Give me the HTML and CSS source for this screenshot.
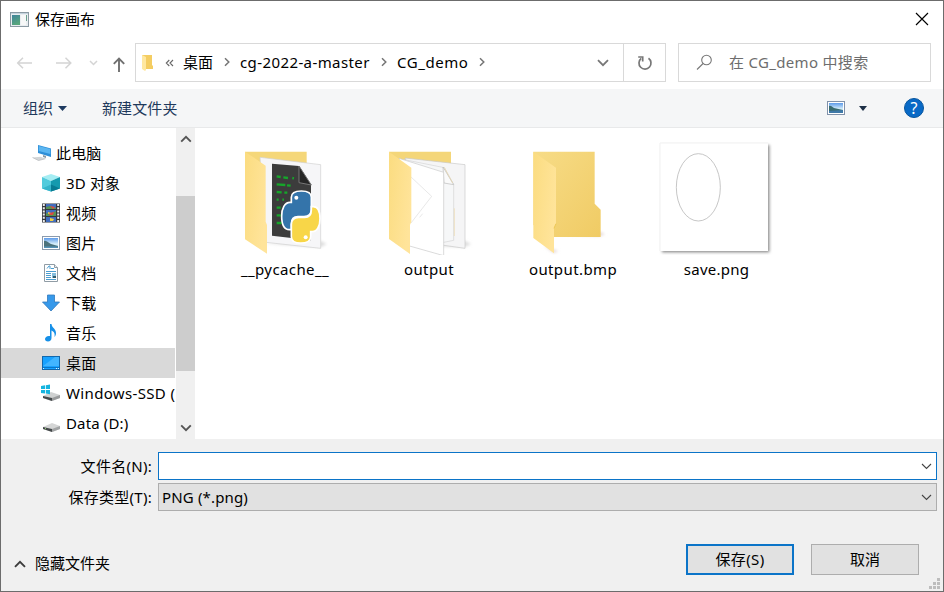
FILE: index.html
```html
<!DOCTYPE html>
<html lang="zh-CN">
<head>
<meta charset="utf-8">
<title>保存画布</title>
<link rel="stylesheet" href="styles.css">
</head>
<body>
<div class="dialog">
  <header class="titlebar">
    <svg class="app-icon" width="19" height="15" viewBox="0 0 19 15"><defs><linearGradient id="app" x2="0.4" y2="1"><stop stop-color="#3f839b"/><stop offset="1" stop-color="#58a67c"/></linearGradient></defs><rect x=".5" y=".5" width="18" height="14" fill="#e9edf0" stroke="#8b9aa3"/><path d="M1 1.5h17" stroke="#c4d3dd"/><rect x="2" y="3" width="8" height="10" fill="url(#app)"/><rect x="11" y="3" width="5" height="10" fill="#f7f8f8"/><path d="M16.5 3v6" stroke="#6ba18d"/></svg>
    <h1 class="title">保存画布</h1>
    <svg class="close" width="14" height="14" viewBox="0 0 14 14"><path d="M1 1l12 12M13 1L1 13" stroke="#000" stroke-width="1.15"/></svg>
  </header>

  <div class="navbar">
    <div class="history">
      <svg width="118" height="24" viewBox="0 0 118 24" fill="none"><g stroke="#d4d4d4" stroke-width="1.5"><path d="M16 12H2M7 6.7L1.7 12 7 17.3M40 12H54.500M49.500 6.700l5.300 5.300-5.300 5.300"/><path d="M74 10l3.500 3.500L81 10"/></g><path d="M103 21V7.500M97.800 12.800L103 7.500l5.200 5.300" stroke="#707070" stroke-width="1.9"/></svg>
    </div>
    <div class="address">
      <svg class="folder" width="13" height="17" viewBox="0 0 13 17"><path d="M1 1h10v10l1 1v3H3z" fill="#f4cd62"/><path d="M1 1l4 2v13l-1 1-3-2z" fill="#ffe8a0"/></svg>
      <svg class="more" width="9" height="8" viewBox="0 0 9 8"><path d="M4.300 1L1.300 4l3 3M8 1L5 4l3 3" fill="none" stroke="#666" stroke-width="1.100"/></svg>
      <span class="crumb desk">桌面</span>
      <svg class="sep" width="6" height="10" viewBox="0 0 6 10"><path d="M1 1.200L4.800 5 1 8.800" fill="none" stroke="#757575" stroke-width="1.500"/></svg>
      <span class="crumb master">cg-2022-a-master</span>
      <svg class="sep" width="6" height="10" viewBox="0 0 6 10"><path d="M1 1.200L4.800 5 1 8.800" fill="none" stroke="#757575" stroke-width="1.500"/></svg>
      <span class="crumb demo">CG_demo</span>
      <svg class="sep" width="6" height="10" viewBox="0 0 6 10"><path d="M1 1.200L4.800 5 1 8.800" fill="none" stroke="#757575" stroke-width="1.500"/></svg>
      <svg class="drop" width="12" height="8" viewBox="0 0 12 8"><path d="M1 1.200l5 5 5-5" fill="none" stroke="#777" stroke-width="1.800"/></svg>
      <div class="refresh"><svg width="16" height="16" viewBox="0 0 16 16" fill="none" stroke="#777" stroke-width="1.700"><path d="M11.500 3.200A6 6 0 1 1 4.200 3.400"/><path d="M1.200 2h4.500v4.500"/></svg></div>
    </div>
    <div class="search">
      <svg width="17" height="17" viewBox="0 0 17 17" fill="none" stroke="#777" stroke-width="1.100"><circle cx="10.500" cy="6" r="4.800"/><path d="M7.100 9.500L1 15.500"/></svg>
      <span>在 CG_demo 中搜索</span>
    </div>
  </div>

  <div class="toolbar">
    <span class="organize">组织</span>
    <svg class="caret" width="9" height="5" viewBox="0 0 9 5"><path d="M0 0h9L4.500 5z" fill="#1e3a60"/></svg>
    <span class="new-folder">新建文件夹</span>
    <svg class="view" width="18" height="14" viewBox="0 0 18 14"><defs><linearGradient id="sky" x2="0" y2="1"><stop stop-color="#5d9bea"/><stop offset=".6" stop-color="#d8effa"/><stop offset="1" stop-color="#b9dced"/></linearGradient></defs><rect x=".5" y=".5" width="17" height="13" fill="#fff" stroke="#8192aa"/><rect x="2" y="2" width="14" height="10" fill="url(#sky)"/><path d="M2 5c2-1 3 1 5 2l9 2v3H2z" fill="#396c70"/><path d="M2 10l14-1v3H2z" fill="#3f79a8"/></svg>
    <svg class="caret view-caret" width="8" height="5" viewBox="0 0 8 5"><path d="M0 0h8L4 5z" fill="#1e3047"/></svg>
    <div class="help">?</div>
  </div>

  <main class="body">
    <nav class="tree">
      <div class="row root"><svg width="20" height="18" viewBox="0 0 20 18"><path d="M6 1l13 3.500v8.500L6 9z" fill="#2e8fd8"/><path d="M6.800 2l11.500 3v5L6.800 7z" fill="#5bb6f1"/><path d="M11 11l3 1v2l-3-1z" fill="#8b9aa5"/><path d="M.5 13.500l8-.8 5 2-7 1.800z" fill="#d2d5d7"/><path d="M.5 13.500l6 3 7-1.800" fill="none" stroke="#b5b8ba" stroke-width=".7"/></svg><span>此电脑</span></div>
      <div class="row"><svg width="20" height="20" viewBox="0 0 20 20"><path d="M1 4l9-3 9 3-9 4z" fill="#a5edf3"/><path d="M1 4l9 4v10.500l-9-3z" fill="#52cbdc"/><path d="M10 8l9-4v11.500l-9 3z" fill="#159aae"/><path d="M1 15.500l9-4v7z" fill="#36b5cb"/><path d="M10 11.500l9 4-9 3z" fill="#087b92"/></svg><span>3D 对象</span></div>
      <div class="row"><svg width="20" height="20" viewBox="0 0 20 20"><path d="M1 .5h18v19H1z" fill="#33373d"/><path d="M2.800 1v18M17.200 1v18" stroke="#eee" stroke-width="2" stroke-dasharray="2 1.200"/><path d="M5 1h10v5H5zM5 7h10v6H5zM5 14h10v5H5z" fill="#426dbd"/><path d="M5 4l4-1 6 2v1H5zM5 10l4 1 6-3v5H5z" fill="#589252"/><path d="M9 3l5 1-2 2zM8 10l5-1-1 3H8z" fill="#dd4b3e"/><path d="M9 15l4 1-1 2H9zM7 9l3 1-3 1z" fill="#f0ce44"/></svg><span>视频</span></div>
      <div class="row"><svg width="20" height="16" viewBox="0 0 20 16"><rect x="1.500" y="1.500" width="17" height="13" fill="#fff" stroke="#8b9bad"/><rect x="3" y="3" width="14" height="10" fill="url(#sky)"/><path d="M3 6c3-1 4 2 7 3l7 2v2H3z" fill="#4b727b"/><path d="M3 11.500h14V13H3z" fill="#5491b6"/></svg><span>图片</span></div>
      <div class="row"><svg width="20" height="20" viewBox="0 0 20 20"><path d="M3.500 1.500h10l3 3v14h-13z" fill="#fff" stroke="#909ca5"/><path d="M13.500 1.500v3h3" fill="#e5ebef" stroke="#909ca5"/><path d="M6 5.500L8 3h1v3M10 5.500h3M5 8.500h10M5 10.500h5M5 12.500h5M5 14.500h5M5 16.500h10" stroke="#4a9dd0" fill="none"/><path d="M11 10h4v5h-4z" fill="#84bddd"/><path d="M12 13h3v2h-3z" fill="#335c6b"/></svg><span>文档</span></div>
      <div class="row"><svg width="20" height="20" viewBox="0 0 20 20"><path d="M6.500 2h7v7h5L10 18 1.500 9h5z" fill="#3799ea" stroke="#3178bc" stroke-width=".8"/></svg><span>下载</span></div>
      <div class="row"><svg width="20" height="20" viewBox="0 0 20 20"><path d="M9 1h1.500c.3 4 4.500 4.500 4.500 9 0 1.800-.6 3-1.500 4 .7-4-.7-5.500-3-6.500V15c0 2.200-1.500 3.500-3.500 3.500S4 17.500 4 16c0-2 2-3.500 5-3z" fill="#1690e8"/></svg><span>音乐</span></div>
      <div class="row selected"><svg width="20" height="16" viewBox="0 0 20 16"><rect x="1.500" y="1.500" width="17" height="13" fill="#18a2ff" stroke="#1268ad"/><path d="M2 11L14 2h4v9z" fill="#42b5ff"/><path d="M2 12.500h16" stroke="#0876c9"/><path d="M2 13.500h1m12 0h1m1 0h1" stroke="#d8f2ff"/></svg><span>桌面</span></div>
      <div class="row"><svg width="20" height="18" viewBox="0 0 20 18"><path d="M2 12l8-4 9 3v3l-9 3-8-3z" fill="#cfd1d1"/><path d="M2 12l9 2v3l-9-3z" fill="#454a4c"/><path d="M11 14l8-3v3l-8 3z" fill="#999b9c"/><path d="M0 2l4-.7V5H0zM4.800 1.200L9 .5V5H4.800zM0 6h4v3.500L0 9zM4.800 6H9v4.200l-4.200-.6z" fill="#15b4df"/></svg><span class="drive">Windows-SSD (</span></div>
      <div class="row"><svg class="disk" width="20" height="16" viewBox="0 0 20 16"><path d="M2 10l9-4 8 3v3l-8 3-9-3z" fill="#d5d6d6"/><path d="M2 10l9 2v3l-9-3z" fill="#44484a"/><path d="M11 12l8-3v3l-8 3z" fill="#a2a4a5"/><path d="M4 11.500l1 .3" stroke="#9be17c"/></svg><span class="data">Data (D:)</span></div>
    </nav>
    <div class="scrollbar">
      <svg class="arrow up" width="12" height="8" viewBox="0 0 12 8"><path d="M1.200 6.700L6 1.900l4.800 4.800" fill="none" stroke="#555" stroke-width="1.900"/></svg>
      <div class="thumb"></div>
      <svg class="arrow down" width="12" height="8" viewBox="0 0 12 8"><path d="M1.200 1.300L6 6.100l4.800-4.800" fill="none" stroke="#555" stroke-width="1.900"/></svg>
    </div>
    <section class="files">
      <figure class="file">
        <svg width="120" height="120" viewBox="-15 0 360 360">
          <defs><linearGradient id="back" x2="1" y2="1"><stop stop-color="#f7dc87"/><stop offset="1" stop-color="#f0cb64"/></linearGradient><linearGradient id="front" x2="1" y2="0.500"><stop stop-color="#fbdc80"/><stop offset="1" stop-color="#ffe49a"/></linearGradient><filter id="soft" x="-20%" y="-50%" width="140%" height="200%"><feGaussianBlur stdDeviation="4"/></filter></defs>
          <path d="M100 325l170-8 20 10-20 10z" fill="#ddd" filter="url(#soft)"/>
          <path d="M45 50h185v50H60z" fill="#f5d779"/>
          <path d="M90 67l182 22v251l-164-18z" fill="#f6f6f8" stroke="#d0d0d0" stroke-width="2"/>
          <path d="M126 86l81 7 36 56v167l-117-14z" fill="#3c3c3c"/>
          <path d="M207 93v50l37 7z" fill="#262626" stroke="#777" stroke-width="3"/>
          <path d="M140 124l12 2m8 1l14 2m13 0l5 1M140 148l26 2m5 1l11 1M140 171l15 1m8 1h9M140 194h6m11 0h5M140 218h12M140 241h12M140 264h15" stroke="#16a62a" stroke-width="7"/>
          <g stroke="#fff" stroke-width="5"><path d="M184 202v-15c0-14 10-19 30-19s30 6 30 19v36c0 14-8 22-22 22h-18c-14 0-20 8-20 22v17h-6c-16 0-23-18-23-41s9-41 25-41z" fill="#3474aa"/><path d="M242 290v15c0 14-10 19-30 19s-28-6-28-19v-36c0-14 8-22 22-22h18c14 0 20-8 20-22v-10h6c14 0 20 13 20 36s-9 39-23 39z" fill="#f8d648"/></g><circle cx="199" cy="188" r="6" fill="#fff"/><circle cx="227" cy="307" r="6" fill="#fff"/>
          <path d="M45 50l62 42v168l4 10v86l-66-43z" fill="url(#front)"/>
        </svg><figcaption class="pycache">__pycache__</figcaption>
      </figure>
      <figure class="file">
        <svg width="120" height="120" viewBox="-18 0 360 360">
          <path d="M120 330l150-12 18 9-20 10z" fill="#ddd" filter="url(#soft)"/>
          <path d="M42 50h186v55H60z" fill="#f4d679"/>
          <path d="M90 69l180 20v251l-70-10z" fill="#f5f5f6" stroke="#c9c9c9" stroke-width="2"/>
          <path d="M88 74l120 24 28 50v168l-50 10z" fill="#f6f7f8" stroke="#d5d5d5" stroke-width="2"/>
          <path d="M204 96l3 48 29 5z" fill="#fafafa" stroke="#b8b8b8" stroke-width="2"/>
          <path d="M208 97l25 47M238 220v83" fill="none" stroke="#edd9ab" stroke-width="2"/>
          <path d="M72 70l134 42v250l-106-30z" fill="#fff" stroke="#c8c8c8" stroke-width="2"/>
          <path d="M106 124l64 60-62 80M134 247l9-11" fill="none" stroke="#ddd" stroke-width="2"/>
          <path d="M42 50l67 48v162l-4 10v87l-63-45z" fill="url(#front)"/>
        </svg><figcaption class="output">output</figcaption>
      </figure>
      <figure class="file">
        <svg width="120" height="120" viewBox="-6 0 360 360">
          <path d="M104 297l150-6 16 7-18 6zM85 332l32 12 13 4-13 6z" fill="#e2d6d4" filter="url(#soft)"/>
          <path d="M55 50h184v156l18 18v82H116L55 270z" fill="url(#back)"/>
          <path d="M55 50l68 48v168l-6 14v75l-62-46z" fill="url(#front)"/><path d="M117 280l6-14" stroke="#edc856" stroke-width="3"/>
        </svg><figcaption class="bmp">output.bmp</figcaption>
      </figure>
      <figure class="file">
        <svg width="120" height="120" viewBox="21 0 360 360"><path d="M36 30h322v322H36z" fill="#858585" filter="url(#soft)"/><path d="M30 24h324v324H30z" fill="#fff"/><path d="M30 348V24h324" stroke="#f1f1f1" stroke-width="3" fill="none"/><ellipse cx="145" cy="157" rx="66" ry="101" fill="none" stroke="#bbb" stroke-width="2.500"/></svg><figcaption class="save">save.png</figcaption>
      </figure>
    </section>
  </main>

  <footer class="footer">
    <div class="field"><label class="name-label">文件名(N):</label><div class="combo active"><span></span><svg width="11" height="7" viewBox="0 0 11 7"><path d="M1 1l4.500 4.500L10 1" fill="none" stroke="#444" stroke-width="1.100"/></svg></div></div>
    <div class="field"><label>保存类型(T):</label><div class="combo"><span>PNG (*.png)</span><svg width="11" height="7" viewBox="0 0 11 7"><path d="M1 1l4.500 4.500L10 1" fill="none" stroke="#444" stroke-width="1.100"/></svg></div></div>
    <div class="actions">
      <svg width="12" height="8" viewBox="0 0 12 8"><path d="M1 6.800l5-5 5 5" fill="none" stroke="#3c3c3c" stroke-width="1.900"/></svg>
      <span class="hide">隐藏文件夹</span>
      <button class="primary">保存(S)</button>
      <button>取消</button>
    </div>
    <svg class="grip" width="12" height="12" viewBox="0 0 12 12"><path d="M8 0h3v3H8zM4 4h3v3H4zM8 4h3v3H8zM0 8h3v3H0zM4 8h3v3H4zM8 8h3v3H8z" fill="#bdbdbd"/></svg>
  </footer>
</div>
</body>
</html>
```
FILE: styles.css
```css
* { box-sizing: border-box; }
body {
  margin: 0;
  font: 15px/20px "Noto Sans", "Noto Sans CJK SC", sans-serif;
  color: #000;
}
svg { display: block; flex-shrink: 0; }
span, label { white-space: nowrap; }
.dialog {
  width: 944px;
  height: 592px;
  border: 1px solid #6c6c6c;
  background: #fff;
  display: flex;
  flex-direction: column;
  overflow: hidden;
}
.titlebar {
  height: 42px;
  padding: 0 14px 6px 9px;
  display: flex;
  align-items: center;
}
.title { margin: 0 0 0 6px; font-size: 15px; font-weight: 400; line-height: 20px; }
.close { margin-left: auto; }
.navbar { height: 46px; display: flex; align-items: flex-start; padding-right: 12px; }
.history { width: 134px; height: 39px; display: flex; align-items: center; padding-left: 15px; }
.address {
  width: 531px;
  height: 39px;
  border: 1px solid #d9d9d9;
  display: flex;
  align-items: center;
}
.folder { margin-left: 5px; }
.more { margin-left: 11px; }
.crumb { padding-bottom: 2px; flex-shrink: 0; }
.desk { width: 33px; margin-left: 9px; }
.master { width: 133px; margin-left: 10px; letter-spacing: 0.4px; }
.demo { width: 74px; margin-left: 10px; letter-spacing: 0.55px; }
.sep { margin-left: 8px; margin-bottom: 2px; }
.drop { margin-left: auto; margin-right: 14px; }
.refresh {
  width: 42px;
  height: 37px;
  border-left: 1px solid #d9d9d9;
  display: flex;
  align-items: center;
  justify-content: center;
}
.search {
  width: 253px;
  height: 39px;
  margin-left: 12px;
  border: 1px solid #d9d9d9;
  display: flex;
  align-items: center;
  padding-left: 17px;
  color: #6d6d6d;
}
.search span { margin-left: 16px; padding-bottom: 2px; letter-spacing: 0.32px; }
.toolbar {
  height: 39px;
  background: #f5f6f7;
  border-bottom: 1px solid #e8e9ea;
  display: flex;
  align-items: center;
  padding: 0 19px 0 22px;
  color: #1e395b;
}
.caret { margin-left: 5px; }
.new-folder { margin-left: 35px; letter-spacing: 0.1px; }
.view { margin-left: auto; }
.view-caret { margin-left: 14px; }
.help {
  width: 20px;
  height: 20px;
  margin-left: 37px;
  border-radius: 50%;
  background: #0869c6;
  border: 1px solid #07559e;
  color: #fff;
  font-size: 16px;
  line-height: 18px;
  text-align: center;
}
.body { height: 311px; display: flex; }
.tree { width: 174px; padding-top: 10px; overflow: hidden; }
.row { height: 30px; display: flex; align-items: center; padding-left: 40px; }
.row span { margin-left: 5px; letter-spacing: 0.15px; }
.root { padding-left: 31px; }
.root span { margin-left: 4px; }
.row .drive { letter-spacing: 0.35px; }
.disk { margin-top: 4px; }
.selected { background: #d9d9d9; }
.scrollbar {
  width: 19px;
  margin-left: 1px;
  background: #f0f0f0;
  display: flex;
  flex-direction: column;
  align-items: center;
}
.up { margin-top: 7px; }
.thumb { width: 19px; height: 175px; margin-top: 53px; background: #cdcdcd; }
.down { margin-top: auto; margin-bottom: 7px; }
.files { flex: 1; display: flex; padding: 7px 0 0 18px; }
.file { width: 144px; margin: 0; }
.file svg { margin: 0 auto; }
figcaption { text-align: center; line-height: 28px; letter-spacing: 0.4px; }
.save { letter-spacing: 0.25px; margin-left: -1px; }
.footer {
  position: relative;
  flex: 1;
  background: #f0f0f0;
  padding: 13px 6px 0 0;
}
.field { height: 28px; display: flex; align-items: center; margin-bottom: 3px; }
.field label { width: 151px; text-align: right; letter-spacing: 0.28px; }
.combo {
  flex: 1;
  height: 28px;
  margin-left: 6px;
  padding: 0 4px 0 3px;
  border: 1px solid #adadad;
  background: #e1e1e1;
  display: flex;
  align-items: center;
  justify-content: space-between;
  letter-spacing: 0.15px;
}
.active { border-color: #0b74c8; background: #fff; }
.actions { display: flex; align-items: center; height: 31px; margin-top: 33px; padding: 0 18px 0 13px; }
.hide { margin: 6px auto 0 9px; }
.actions svg { margin-top: 8px; }
button {
  width: 108px;
  height: 31px;
  margin-left: 17px;
  padding: 0 0 1px;
  border: 1px solid #adadad;
  background: #e1e1e1;
  color: #000;
  font: inherit;
}
.primary { border: 2px solid #0b74c8; letter-spacing: 0.4px; }
.grip { position: absolute; right: 2px; bottom: 1px; }
```
